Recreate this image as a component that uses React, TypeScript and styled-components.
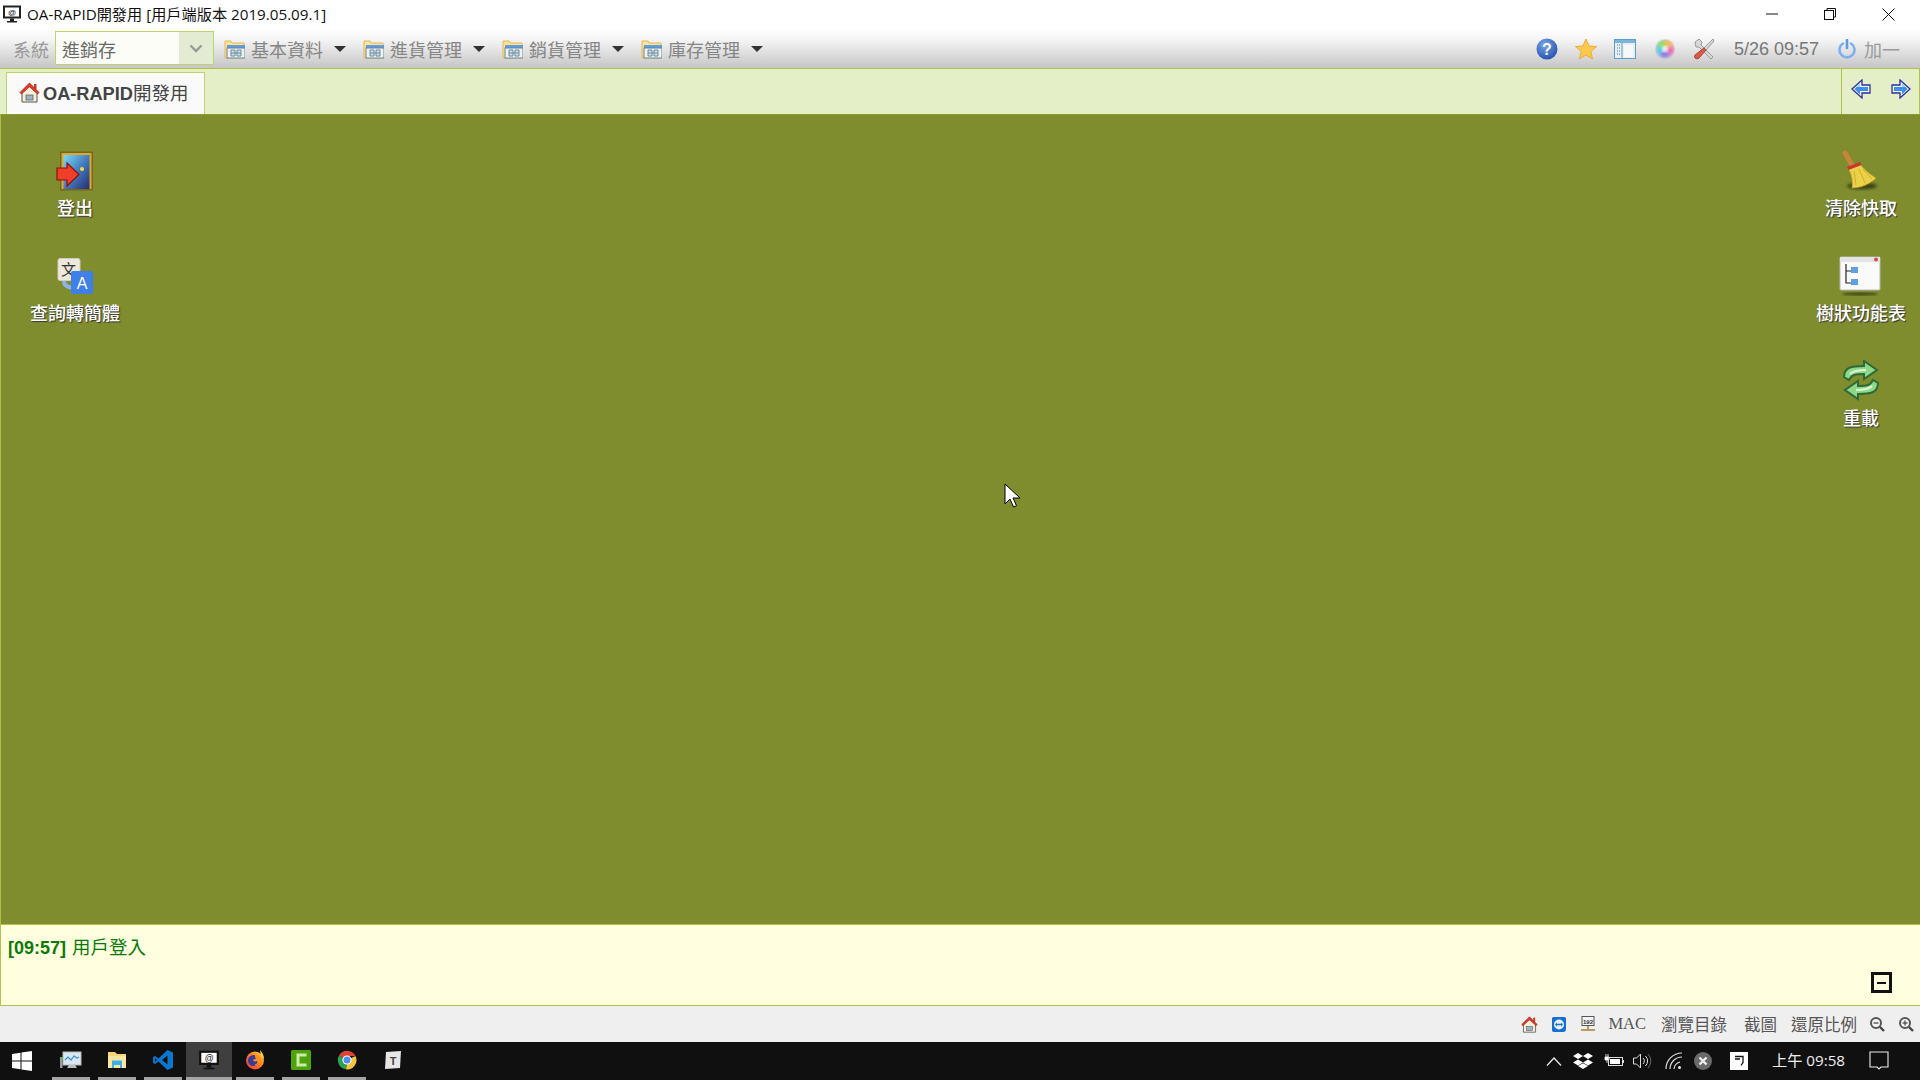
import React from "react";
import styled, { createGlobalStyle } from "styled-components";

const CJK = `"Noto Sans CJK TC", "Noto Sans CJK SC", sans-serif`;

const Global = createGlobalStyle`
  html, body { margin: 0; padding: 0; background: #fff; overflow: hidden; }
  * { box-sizing: border-box; }
`;
const Page = styled.div`
  position: relative; width: 1920px; height: 1080px; display: flex; flex-direction: column;
  font-family: "Liberation Sans", ${CJK}; overflow: hidden;
`;
const TitleBar = styled.div`
  height: 28px; flex: none; background: #fff; display: flex; align-items: center; padding-left: 2px;
`;
const TitleText = styled.span`
  margin-left: 5px; font: 15.2px "Open Sans", ${CJK}; color: #111; white-space: nowrap; line-height: 28px;
`;
const WindowButtons = styled.div`margin-left: auto; display: flex; padding-right: 3px;`;
const WindowButton = styled.div`
  width: 58px; height: 28px; display: flex; align-items: center; justify-content: center;
`;
const MenuBar = styled.div`
  height: 41px; flex: none; display: flex; align-items: center; padding: 1px 0 0 13px;
  background: linear-gradient(#ffffff 0%, #f4f4f4 30%, #c6c6c6 100%);
  border-bottom: 1px solid #b2c244;
`;
const SystemLabel = styled.span`font: 18px ${CJK}; color: #9a9a9a; width: 42px; flex: none; white-space: nowrap;`;
const Select = styled.div`
  width: 159px; height: 34px; flex: none; display: flex; margin-right: 10px; margin-top: -1px;
  background: #fdfdf8; border: 1px solid #c3cf70;
`;
const SelectValue = styled.div`flex: 1; font: 18px/34px ${CJK}; color: #6a6a6a; padding-left: 6px;`;
const SelectArrow = styled.div`
  width: 34px; background: #e3ebd3; display: flex; align-items: center; justify-content: center;
`;
const MenuItem = styled.div`
  width: 139px; flex: none; display: flex; align-items: center; height: 34px;
`;
const MenuText = styled.span`font: 18px ${CJK}; color: #858585; margin-left: 6px; white-space: nowrap;`;
const Caret = styled.span`
  margin-left: 11px; width: 0; height: 0; border-left: 6px solid transparent; border-right: 6px solid transparent;
  border-top: 6px solid #333;
`;
const Tools = styled.div`margin-left: auto; display: flex; align-items: center; padding-right: 20px;`;
const ToolIcon = styled.div`
  width: 39.4px; display: flex; justify-content: center; align-items: center;
`;
const Clock = styled.span`font: 18px "Liberation Sans", sans-serif; color: #777; margin: 0 19px 0 10px; padding-top: 2px; white-space: nowrap;`;
const PowerText = styled.span`font: 18px ${CJK}; color: #9a9a9a; margin-left: 8px; white-space: nowrap;`;
const TabBar = styled.div`
  height: 45px; flex: none; display: flex; background: #e4efc8; padding-left: 6px; padding-top: 3px;
`;
const Tab = styled.div`
  width: 199px; height: 42px; background: #fafafa; border: 1px solid #c3cf70; border-bottom: none;
  display: flex; align-items: center; padding: 0 0 3px 12px; gap: 3px;
`;
const TabText = styled.span`font: 18.5px ${CJK}; color: #444; white-space: nowrap;`;
const TabLatin = styled.b`font: bold 18.2px "Liberation Sans", sans-serif; color: #444;`;
const NavBox = styled.div`
  margin-left: auto; margin-top: -3px; width: 79px; border-left: 1px solid #b2c244; border-right: 1px solid #b2c244;
  display: flex; justify-content: space-between; padding: 10px 8px 0 9px; gap: 10px; height: 45px;
`;
const Desktop = styled.div`
  flex: 1; background: #7f8d2e; border-left: 1px solid #aebf45; border-top: 1px solid #8a9a34;
  display: flex; justify-content: space-between; padding: 32px 1px 0 0;
`;
const IconColumn = styled.div<{ $right?: boolean }>`
  display: flex; flex-direction: column; width: 116px; margin-left: ${p => p.$right ? "0" : "16px"};
`;
const DesktopItem = styled.div`
  height: 105px; display: flex; flex-direction: column; align-items: center;
`;
const IconBox = styled.div`height: 48px; width: 60px; display: flex; align-items: center; justify-content: center; margin-bottom: 0;`;
const DesktopLabel = styled.span`
  font: 500 18px/24px ${CJK}; color: #fff; text-shadow: 1px 1px 1px #333; white-space: nowrap;
`;
const LogPanel = styled.div`
  height: 82px; flex: none; position: relative; background: #ffffe0; border-left: 1px solid #b2c244;
  border-top: 1px solid #b2c244; border-bottom: 1px solid #b2c244; padding: 9px 7px;
`;
const LogLine = styled.div`font: 18.5px/24px ${CJK}; color: #0a7a0a;`;
const LogTime = styled.b`font: bold 18px "Liberation Sans", sans-serif; margin-right: 6px;`;
const Collapse = styled.div`
  position: absolute; right: 28px; bottom: 12px; width: 21px; height: 21px; border: 3px solid #111;
  display: flex; align-items: center; justify-content: center;
`;
const CollapseDash = styled.span`width: 9px; height: 2px; background: #111;`;
const StatusBar = styled.div`
  height: 36px; flex: none; background: #efefef; display: flex; align-items: center; justify-content: flex-end;
`;
const StatusText = styled.span<{ $gap?: number; $lead?: number }>`
  font: 16.5px "Liberation Serif", ${CJK}; color: #555; white-space: nowrap;
  margin: 0 ${p => p.$gap ?? 16}px 0 ${p => p.$lead ?? 0}px;
`;
const StatusIcon = styled.div`
  width: 29px; display: flex; justify-content: center; align-items: center;
`;
const Taskbar = styled.div`height: 38px; flex: none; background: #101010; display: flex; align-items: stretch;`;
const StartButton = styled.div`width: 48px; display: flex; align-items: center; justify-content: center; padding-right: 4px;`;
const TaskItem = styled.div<{ $active?: boolean }>`
  position: relative; width: 46px; display: flex; align-items: center; justify-content: center;
  background: ${p => p.$active ? "#3f3f3f" : "transparent"}; padding-bottom: 3px;
`;
const TaskUnderline = styled.span<{ $active?: boolean }>`
  position: absolute; left: ${p => p.$active ? 0 : 4}px; right: ${p => p.$active ? 0 : 4}px; bottom: 0; height: 3px; background: #a5a5a5;
`;
const Tray = styled.div`margin-left: auto; display: flex; align-items: center; color: #eee;`;
const TrayIcon = styled.div<{ $w?: number }>`display: flex; align-items: center; justify-content: center; width: ${p => p.$w ?? 29}px;`;
const TrayClock = styled.span`font: 15.2px/38px "Open Sans", ${CJK}; color: #eee; white-space: nowrap; margin: -3px 12px 0 11px;`;
const Pointer = styled.div`position: absolute; left: 1004px; top: 483px; line-height: 0;`;

const Monitor = ({ s = 20, c = "#222" }: { s?: number; c?: string }) => (
  <svg width={s} height={s} viewBox="0 0 20 20">
    <rect x="1" y="1.5" width="18" height="13" fill={c} />
    <rect x="3" y="3.5" width="14" height="9" fill="#fff" />
    <text x="10" y="11" fontSize="8" fontStyle="italic" fontWeight="700" fontFamily="Liberation Sans" textAnchor="middle" fill="#222">@</text>
    <rect x="8" y="14.5" width="4" height="2.5" fill={c} />
    <rect x="5" y="17" width="10" height="1.5" fill={c} />
  </svg>
);
const FolderCal = () => (
  <svg width="21" height="20" viewBox="0 0 21 20">
    <path d="M1 2h6l1 2h12v15H1z" fill="#fbe3a0" stroke="#e9b850" />
    <rect x="3" y="6" width="18" height="3" fill="#5f9de0" />
    <rect x="3" y="9" width="18" height="10" fill="#eef3ef" stroke="#6b8496" strokeWidth="1" />
    <path d="M7 11h4v6H7zM13 11h4v6h-4zM7 14h10" fill="#cfe0ea" stroke="#6d8aa0" strokeWidth="1" />
  </svg>
);
const Help = () => (
  <svg width="22" height="22" viewBox="0 0 22 22">
    <defs><radialGradient id="hb" cx=".4" cy=".3" r=".8"><stop offset="0" stopColor="#7aa5ea" /><stop offset="1" stopColor="#1f4aa8" /></radialGradient></defs>
    <circle cx="11" cy="11" r="10.5" fill="url(#hb)" />
    <text x="11" y="17" fontSize="16" fontWeight="700" fontFamily="Liberation Sans" textAnchor="middle" fill="#fff">?</text>
  </svg>
);
const Star = () => (
  <svg width="22" height="22" viewBox="0 0 22 22">
    <path d="M11 1l3 7 7.5.6-5.7 4.9 1.800 7.400L11 17l-6.600 3.900 1.800-7.400L.5 8.600 8 8z" fill="#fcc94c" stroke="#eda93a" />
  </svg>
);
const PanelIcon = () => (
  <svg width="22" height="20" viewBox="0 0 22 20">
    <rect x=".5" y=".5" width="21" height="19" fill="#e9eef0" stroke="#5a9fc8" />
    <rect x="1" y="1" width="20" height="3" fill="#7db5d8" />
    <path d="M8 4v15" stroke="#5a9fc8" />
    <path d="M3 6h3M3 9h3M3 12h3M3 15h3" stroke="#4a7a98" strokeDasharray="1 1" />
    <rect x="10" y="6" width="9" height="12" fill="#f8f8f8" />
  </svg>
);
const ColorWheel = () => (
  <svg width="20" height="20" viewBox="0 0 20 20">
    <defs><filter id="cb"><feGaussianBlur stdDeviation="1.4" /></filter></defs>
    <circle cx="10" cy="10" r="9.5" fill="#ccc" />
    <g filter="url(#cb)">
      <path d="M10 10L10 1 A9 9 0 0 1 18 7z" fill="#f7b75a" />
      <path d="M10 10L18 7 A9 9 0 0 1 15 17z" fill="#f06db2" />
      <path d="M10 10L15 17 A9 9 0 0 1 4 16z" fill="#8b7cf0" />
      <path d="M10 10L4 16 A9 9 0 0 1 2 7z" fill="#58cde8" />
      <path d="M10 10L2 7 A9 9 0 0 1 10 1z" fill="#8be070" />
    </g>
    <circle cx="10" cy="10" r="3.2" fill="#f4f4f4" opacity=".9" filter="url(#cb)" />
  </svg>
);
const ToolsIcon = () => (
  <svg width="22" height="22" viewBox="0 0 22 22">
    <path d="M2 4l4-3 3 3-1 3 12 12-2 2L6 9 3 9z" fill="#d8d8d8" stroke="#999" />
    <path d="M20 1l1 2-8 9-2-2z" fill="#d8d8d8" stroke="#999" />
    <path d="M11 10l2 2-7 8c-1 1-3 1-4 0s0-3 0-3z" fill="#dc5a4a" stroke="#b04030" />
  </svg>
);
const Power = () => (
  <svg width="18" height="20" viewBox="0 0 18 20">
    <path d="M5 4.5a7.5 7.5 0 1 0 8 0" fill="none" stroke="#7fb0ee" strokeWidth="2.6" strokeLinecap="round" />
    <path d="M9 1v8" stroke="#5d9ae8" strokeWidth="2.6" strokeLinecap="round" />
  </svg>
);
const HomeIcon = ({ s = 21 }: { s?: number }) => (
  <svg width={s} height={s} viewBox="0 0 21 21">
    <rect x="15" y="2" width="2.5" height="5" fill="#c8402c" />
    <path d="M3 10h15v10H3z" fill="#f5efd8" stroke="#555" />
    <path d="M10.5 1L1 10.5l1.500 1.500 8-7 8 7 1.500-1.500z" fill="#e03a2c" stroke="#9c1f14" strokeWidth=".8" />
    <path d="M10.500 5.500l-7 6h14z" fill="#fbf3dc" />
    <rect x="7" y="13" width="7" height="5" fill="#9fb4c8" stroke="#555" strokeWidth=".7" />
  </svg>
);
const NavArrow = ({ left }: { left?: boolean }) => (
  <svg width="20" height="20" viewBox="0 0 20 20" style={left ? { transform: "scaleX(-1)" } : undefined}>
    <path d="M1 6h8V1l10 9-10 9v-5H1z" fill="#f0f5ff" stroke="#2c2f9c" strokeWidth="1.300" />
    <path d="M3 8h8V4.500L16.500 10 11 15.500V12H3z" fill="#3f8fec" />
    <path d="M3 8h8V4.500L14.500 8z" fill="#a8d2fa" />
  </svg>
);
const DoorIcon = () => (
  <svg width="42" height="40" viewBox="0 0 42 40">
    <defs><linearGradient id="dg" x1="0" y1="0" x2="1" y2="1"><stop offset="0" stopColor="#7adcfa" /><stop offset=".55" stopColor="#3f74b8" /><stop offset="1" stopColor="#2a2c70" /></linearGradient></defs>
    <rect x="6" y=".5" width="33" height="39" fill="#7a6420" />
    <rect x="7.500" y="2" width="30" height="36" fill="#dcaa2c" />
    <rect x="9.500" y="4" width="26" height="34" fill="url(#dg)" />
    <circle cx="28" cy="18" r="2" fill="#f8d840" />
    <path d="M3 17h10v-5l12 11.500L13 35v-6H3z" fill="#ee4028" stroke="#8c1010" strokeWidth="1.200" />
  </svg>
);
const TranslateIcon = () => (
  <svg width="37" height="37" viewBox="0 0 37 37">
    <rect x="1" y=".5" width="22" height="22" rx="2" fill="#ece9dc" stroke="#cfcdbf" />
    <text x="11.500" y="17" fontSize="15" fontFamily="Noto Sans CJK TC" textAnchor="middle" fill="#333">文</text>
    <path d="M7 23c0 6 6 7 12 6" fill="none" stroke="#8eb3e6" strokeWidth="4" />
    <rect x="14" y="13" width="22" height="23" rx="2" fill="#3f7fe8" />
    <text x="25" y="30.500" fontSize="16" fontFamily="Liberation Sans" textAnchor="middle" fill="#fff">A</text>
  </svg>
);
const BroomIcon = () => (
  <svg width="40" height="44" viewBox="0 0 40 44">
    <defs><filter id="bb"><feGaussianBlur stdDeviation="1.800" /></filter></defs>
    <ellipse cx="21" cy="37" rx="15" ry="3.500" fill="#3e4518" filter="url(#bb)" />
    <path d="M4 4l7 12" stroke="#c8843a" strokeWidth="5" strokeLinecap="round" />
    <path d="M7 19l12-4c3 4 8 9 16 14-6 6-15 10-24 10 1-7 0-13-4-20z" fill="#ecd048" stroke="#c4a020" strokeWidth=".7" />
    <path d="M6 18l13-5 1.500 3L7.500 21z" fill="#c8362c" />
    <path d="M13 22l2 14M18 20l6 14M22 20l9 10" stroke="#c8a82c" strokeWidth=".8" />
  </svg>
);
const TreeIcon = () => (
  <svg width="44" height="44" viewBox="0 -2 44 44">
    <defs><filter id="tb"><feGaussianBlur stdDeviation="1" /></filter></defs>
    <ellipse cx="21" cy="38" rx="18" ry="1.500" fill="#3c4216" filter="url(#tb)" />
    <rect x="1" y="1" width="40" height="33" rx="1" fill="#fafafa" stroke="#b8b8b8" />
    <rect x="1" y="1" width="40" height="5" fill="#e4e4e4" />
    <circle cx="37" cy="3.500" r="2" fill="#d84a50" />
    <path d="M7 8v19h5M7 15h5" fill="none" stroke="#222" strokeWidth="1.200" />
    <rect x="12" y="11" width="7" height="6" fill="#5d9fe0" />
    <rect x="12" y="23" width="7" height="6" fill="#5d9fe0" />
  </svg>
);
const ReloadIcon = () => (
  <svg width="38" height="42" viewBox="0 2 38 42">
    <path d="M2 19C2 9 10 8 22 8V3l13 9-13 9v-5C14 16 10 16 7 22z" fill="#8fd88a" stroke="#2e6a38" strokeWidth="2" />
    <path d="M36 25c0 10-8 11-20 11v5L3 32l13-9v5c8 0 12 0 15-6z" fill="#8fd88a" stroke="#2e6a38" strokeWidth="2" />
    <path d="M8 16c3-3 8-4 16-4" stroke="#dcf6d4" strokeWidth="2" fill="none" />
    <path d="M30 28c-3 3-8 4-16 4" stroke="#dcf6d4" strokeWidth="2" fill="none" />
  </svg>
);
const TeamViewer = () => (
  <svg width="16" height="17" viewBox="0 0 16 17">
    <path d="M3 1h10c2 0 2 1 2 2v10c0 2-1 3-3 3H3c-2 0-2-1-2-3V3c0-1 0-2 2-2z" fill="#1a6fd0" />
    <circle cx="8" cy="8.500" r="5" fill="#e8f2fc" />
    <path d="M4 8.500l2-2v1.200h4V6.500l2 2-2 2V9.300H6v1.200z" fill="#1a6fd0" />
  </svg>
);
const IpIcon = () => (
  <svg width="16" height="16" viewBox="0 0 16 16">
    <rect x="2" y="0.500" width="12" height="9" fill="#f5f5f5" stroke="#555" />
    <text x="8" y="7.500" fontSize="6" fontFamily="Liberation Sans" fontWeight="700" textAnchor="middle" fill="#333">192</text>
    <path d="M8 10v3M1 14h14" stroke="#a8802c" strokeWidth="1.500" />
  </svg>
);
const Magnifier = ({ plus }: { plus?: boolean }) => (
  <svg width="16" height="16" viewBox="0 0 16 16">
    <circle cx="7" cy="7" r="5" fill="#f4f4f4" stroke="#555" strokeWidth="2" />
    <path d="M11 11l4 4" stroke="#444" strokeWidth="2.400" />
    <path d="M4.500 7h5" stroke="#555" strokeWidth="1.400" />
    {plus && <path d="M7 4.500v5" stroke="#555" strokeWidth="1.400" />}
  </svg>
);
const WinLogo = () => (
  <svg width="20" height="20" viewBox="0 0 20 20" fill="#fff">
    <path d="M0 3l8.500-1.200v7.700H0zM9.500 1.600L20 0v9.500H9.500zM0 10.500h8.500v7.700L0 17zM9.500 10.500H20V20L9.500 18.400z" />
  </svg>
);
const ResMon = () => (
  <svg width="22" height="20" viewBox="0 0 22 20">
    <rect x="3" y="2" width="18" height="13" fill="#d8e6f0" stroke="#bbb" />
    <path d="M5 10l3-3 3 3 3-4 3 2 2-1" fill="none" stroke="#3a90d8" strokeWidth="1.200" />
    <path d="M9 15h6l2 3H7z" fill="#bbb" />
    <rect x="0" y="7" width="2.500" height="11" fill="#9a9a9a" />
    <rect x="0" y="8" width="2.500" height="2" fill="#52c852" />
  </svg>
);
const Explorer = () => (
  <svg width="20" height="18" viewBox="0 0 20 18">
    <path d="M1 1h7l2 2h9v14H1z" fill="#f7d774" />
    <rect x="1" y="5" width="18" height="12" fill="#fde7a0" />
    <path d="M5 17v-6h10v6h-2v-3H7v3z" fill="#3bb0ea" />
    <rect x="5" y="9.500" width="10" height="3" fill="#3bb0ea" />
  </svg>
);
const VsCode = () => (
  <svg width="20" height="20" viewBox="0 0 20 20">
    <path d="M14.500 0L20 2.500v15L14.500 20 5.500 11.500 2 14 0 13V7l2-1 3.500 2.500z" fill="#0a78d0" />
    <path d="M14.500 5.500L9 10l5.500 4.500zM2 8v4l2-2z" fill="#101010" />
  </svg>
);
const Firefox = () => (
  <svg width="20" height="20" viewBox="0 0 20 20">
    <defs><linearGradient id="ff" x1="1" y1="0" x2="0" y2="1"><stop offset="0" stopColor="#ffd23e" /><stop offset=".5" stopColor="#ff7a1f" /><stop offset="1" stopColor="#e5304a" /></linearGradient></defs>
    <circle cx="10" cy="10.500" r="9" fill="url(#ff)" />
    <circle cx="8.500" cy="10.500" r="5.500" fill="#3a3a9a" />
    <path d="M10 5c3 0 5 2 5 5s-3 6-6 5c3-1 4-2 3-4-2 1-4 0-4-1 1-1 2-1 3-1-1-1-1-3-1-4z" fill="#ff9020" />
    <path d="M15 0c2 2 4 5 4 9l-3-3z" fill="#ffd23e" />
  </svg>
);
const Camtasia = () => (
  <svg width="20" height="20" viewBox="0 0 20 20">
    <rect width="20" height="20" rx="1.500" fill="#4ea30a" />
    <path d="M15.500 3.500H5.500v13h10v-3H8.500v-7h7z" fill="#cdeba8" />
  </svg>
);
const Chrome = () => (
  <svg width="20" height="20" viewBox="0 0 20 20">
    <path d="M10 10L2 5.500A9.300 9.300 0 0 1 18.500 6H10z" fill="#dd4436" />
    <path d="M10 10L18.500 6A9.300 9.300 0 0 1 9 19.300z" fill="#f6c33c" />
    <path d="M10 10L9 19.300A9.300 9.300 0 0 1 2 5.500z" fill="#2ea052" />
    <circle cx="10" cy="10" r="4.600" fill="#fff" />
    <circle cx="10" cy="10" r="3.500" fill="#4d8cf4" />
  </svg>
);
const TApp = () => (
  <svg width="18" height="18" viewBox="0 0 18 18">
    <path d="M2 1l15-1-1 17-15 1z" fill="#e6e6e6" />
    <text x="9" y="13.500" fontSize="11" fontWeight="700" fontFamily="Liberation Sans" textAnchor="middle" fill="#444">T</text>
  </svg>
);
const Dropbox = () => (
  <svg width="20" height="16" viewBox="0 0 20 16" fill="#fff">
    <path d="M5 0l5 3-5 3-5-3zM15 0l5 3-5 3-5-3zM5 6.500l5 3-5 3-5-3zM15 6.500l5 3-5 3-5-3zM5 13l5-2.800 5 2.800-5 3z" />
  </svg>
);
const Battery = () => (
  <svg width="20" height="14" viewBox="0 0 20 14">
    <path d="M2 0v3M4 0v3M1 3h4v3H1zM3 6v3" stroke="#fff" fill="#fff" strokeWidth=".8" />
    <rect x="4.500" y="3.500" width="14" height="8" fill="none" stroke="#ddd" />
    <rect x="6" y="5" width="10" height="5" fill="#fff" />
    <rect x="19" y="6" width="1" height="3" fill="#ddd" />
  </svg>
);
const Speaker = () => (
  <svg width="20" height="18" viewBox="0 0 20 18" fill="none" stroke="#ddd">
    <path d="M1.500 6h3l4-4v14l-4-4h-3z" />
    <path d="M11 6a4 4 0 0 1 0 6M13.500 4a7 7 0 0 1 0 10" />
    <path d="M16 2a10 10 0 0 1 0 14" stroke="#666" />
  </svg>
);
const Wifi = () => (
  <svg width="18" height="18" viewBox="0 0 18 18" fill="none" stroke="#ddd" strokeWidth="1.200">
    <path d="M1 17A16 16 0 0 1 17 1M5 17A12 12 0 0 1 17 5M9 17a8 8 0 0 1 6-7" />
    <circle cx="14.500" cy="15.500" r="1.500" fill="#eee" stroke="none" />
  </svg>
);
const XCircle = () => (
  <svg width="18" height="18" viewBox="0 0 18 18">
    <circle cx="9" cy="9" r="9" fill="#6a6a6a" />
    <path d="M5.500 5.500l7 7M12.500 5.500l-7 7" stroke="#eee" strokeWidth="2.400" />
  </svg>
);
const ImeBox = () => (
  <svg width="18" height="18" viewBox="0 0 18 18">
    <rect width="18" height="18" fill="#fff" />
    <path d="M5 4.500h8v6l-2 3M5 7h5" fill="none" stroke="#111" strokeWidth="1.300" />
  </svg>
);
const Notify = () => (
  <svg width="20" height="20" viewBox="0 0 20 20" fill="none" stroke="#eee" strokeWidth="1.100">
    <path d="M1 1h18v15h-7l-2 2-2-2H1z" />
  </svg>
);

const menus = ["基本資料", "進貨管理", "銷貨管理", "庫存管理"];
const taskIcons = [<ResMon />, <Explorer />, <VsCode />, <Monitor s={22} c="#111" />, <Firefox />, <Camtasia />, <Chrome />, <TApp />];

export default function App() {
  return (
    <Page>
      <Global />
      <TitleBar>
        <Monitor />
        <TitleText>OA-RAPID開發用 [用戶端版本 2019.05.09.1]</TitleText>
        <WindowButtons>
          <WindowButton>
            <svg width="12" height="12" viewBox="0 0 12 12"><path d="M0 6h12" stroke="#111" /></svg>
          </WindowButton>
          <WindowButton>
            <svg width="12" height="12" viewBox="0 0 12 12" fill="none" stroke="#111"><rect x=".5" y="2.500" width="9" height="9" /><path d="M3 2.500V.500h8.500V9H9.500" /></svg>
          </WindowButton>
          <WindowButton>
            <svg width="13" height="13" viewBox="0 0 13 13"><path d="M.5.500l12 12M12.500.500l-12 12" stroke="#111" /></svg>
          </WindowButton>
        </WindowButtons>
      </TitleBar>
      <MenuBar>
        <SystemLabel>系統</SystemLabel>
        <Select>
          <SelectValue>進銷存</SelectValue>
          <SelectArrow>
            <svg width="14" height="9" viewBox="0 0 14 9"><path d="M1.500 1.500L7 7l5.500-5.500" fill="none" stroke="#999" strokeWidth="2.400" /></svg>
          </SelectArrow>
        </Select>
        {menus.map(m => (
          <MenuItem key={m}>
            <FolderCal />
            <MenuText>{m}</MenuText>
            <Caret />
          </MenuItem>
        ))}
        <Tools>
          <ToolIcon><Help /></ToolIcon>
          <ToolIcon><Star /></ToolIcon>
          <ToolIcon><PanelIcon /></ToolIcon>
          <ToolIcon><ColorWheel /></ToolIcon>
          <ToolIcon><ToolsIcon /></ToolIcon>
          <Clock>5/26 09:57</Clock>
          <Power />
          <PowerText>加一</PowerText>
        </Tools>
      </MenuBar>
      <TabBar>
        <Tab>
          <HomeIcon />
          <TabText><TabLatin>OA-RAPID</TabLatin>開發用</TabText>
        </Tab>
        <NavBox>
          <NavArrow left />
          <NavArrow />
        </NavBox>
      </TabBar>
      <Desktop>
        <IconColumn>
          <DesktopItem>
            <IconBox><DoorIcon /></IconBox>
            <DesktopLabel>登出</DesktopLabel>
          </DesktopItem>
          <DesktopItem>
            <IconBox><TranslateIcon /></IconBox>
            <DesktopLabel>查詢轉簡體</DesktopLabel>
          </DesktopItem>
        </IconColumn>
        <IconColumn $right>
          <DesktopItem>
            <IconBox><BroomIcon /></IconBox>
            <DesktopLabel>清除快取</DesktopLabel>
          </DesktopItem>
          <DesktopItem>
            <IconBox><TreeIcon /></IconBox>
            <DesktopLabel>樹狀功能表</DesktopLabel>
          </DesktopItem>
          <DesktopItem>
            <IconBox><ReloadIcon /></IconBox>
            <DesktopLabel>重載</DesktopLabel>
          </DesktopItem>
        </IconColumn>
      </Desktop>
      <LogPanel>
        <LogLine><LogTime>[09:57]</LogTime>用戶登入</LogLine>
        <Collapse><CollapseDash /></Collapse>
      </LogPanel>
      <StatusBar>
        <StatusIcon><HomeIcon s={17} /></StatusIcon>
        <StatusIcon><TeamViewer /></StatusIcon>
        <StatusIcon><IpIcon /></StatusIcon>
        <StatusText $lead={6} $gap={15}>MAC</StatusText>
        <StatusText $gap={17}>瀏覽目錄</StatusText>
        <StatusText $gap={14}>截圖</StatusText>
        <StatusText $gap={5}>還原比例</StatusText>
        <StatusIcon><Magnifier /></StatusIcon>
        <StatusIcon><Magnifier plus /></StatusIcon>
      </StatusBar>
      <Taskbar>
        <StartButton><WinLogo /></StartButton>
        {taskIcons.map((icon, i) => (
          <TaskItem key={i} $active={i === 3}>
            {icon}
            {i < 7 && <TaskUnderline $active={i === 3} />}
          </TaskItem>
        ))}
        <Tray>
          <TrayIcon $w={19}>
            <svg width="16" height="9" viewBox="0 0 16 9"><path d="M1 8.500L8 1l7 7.500" fill="none" stroke="#eee" strokeWidth="1.200" /></svg>
          </TrayIcon>
          <TrayIcon $w={39}><Dropbox /></TrayIcon>
          <TrayIcon $w={23}><Battery /></TrayIcon>
          <TrayIcon $w={33}><Speaker /></TrayIcon>
          <TrayIcon $w={31}><Wifi /></TrayIcon>
          <TrayIcon $w={27}><XCircle /></TrayIcon>
          <TrayIcon $w={44}><ImeBox /></TrayIcon>
          <TrayClock>上午 09:58</TrayClock>
          <TrayIcon $w={44}><Notify /></TrayIcon>
          <TrayIcon $w={19} />
        </Tray>
      </Taskbar>
      <Pointer>
        <svg width="17" height="26" viewBox="0 0 17 26">
          <path d="M1 1v20l5-5 3.500 8 3-1.300L9 15h7z" fill="#fff" stroke="#000" />
        </svg>
      </Pointer>
    </Page>
  );
}
